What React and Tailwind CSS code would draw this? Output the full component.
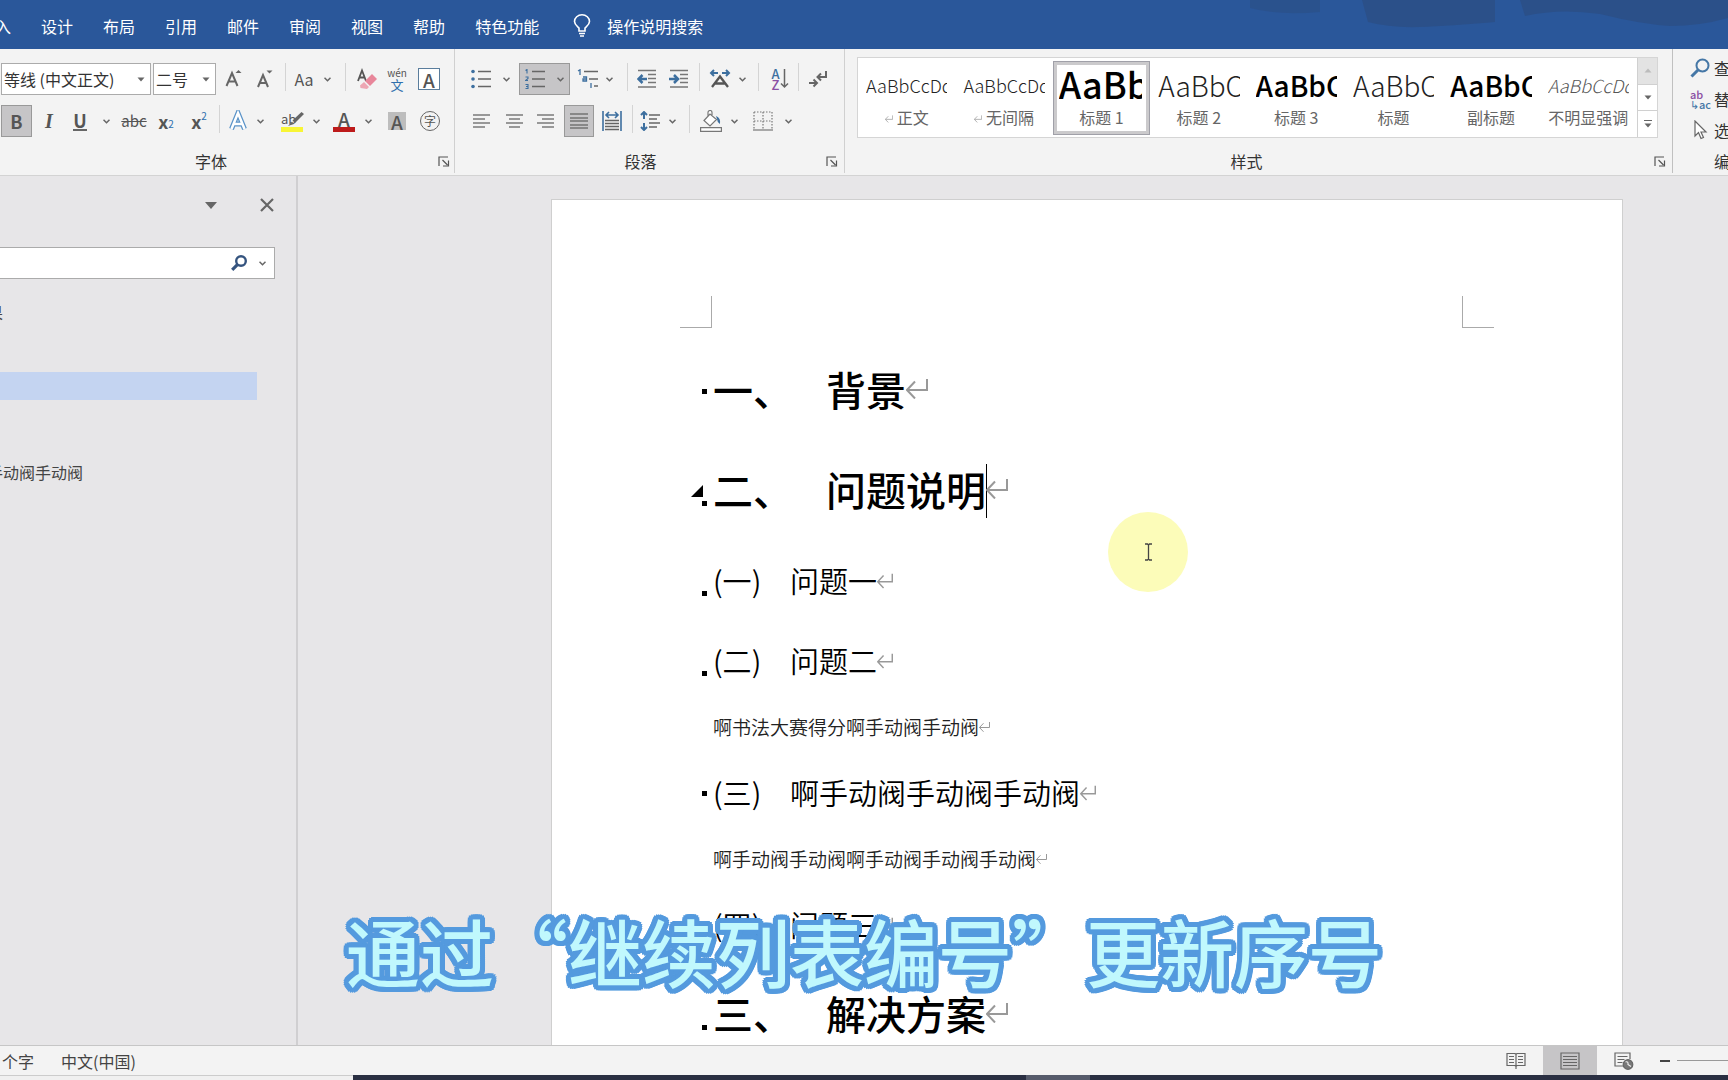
import clsx from "clsx";

const TABS = ["插入", "设计", "布局", "引用", "邮件", "审阅", "视图", "帮助", "特色功能"];

const STYLES = [
  { name: "正文",     sample: "AaBbCcDd", look: "text-lg font-light", mark: true },
  { name: "无间隔",   sample: "AaBbCcDd", look: "text-lg font-light", mark: true },
  { name: "标题 1",   sample: "AaBb",     look: "text-[36px] font-medium text-black", active: true },
  { name: "标题 2",   sample: "AaBbC",    look: "text-[28px] font-light" },
  { name: "标题 3",   sample: "AaBbC",    look: "text-[28px] font-medium text-black" },
  { name: "标题",     sample: "AaBbC",    look: "text-[28px] font-light" },
  { name: "副标题",   sample: "AaBbC",    look: "text-[28px] font-medium text-black" },
  { name: "不明显强调", sample: "AaBbCcDd", look: "text-lg font-light italic text-[#555]" },
];

/* ── Small shared pieces ── */

function Tool({ label, className, on, children }) {
  return (
    <button
      type="button"
      aria-label={label}
      className={clsx(
        "flex h-8 shrink-0 items-center justify-center text-[#555]",
        on && "border border-[#999] bg-[#c6c5c7]",
        className
      )}
    >
      {children}
    </button>
  );
}

function Chevron() {
  return (
    <svg width="7" height="5" viewBox="0 0 7 5" fill="none" stroke="#666" strokeWidth="1.5">
      <path d="M.5 .8 3.5 3.8 6.5 .8" />
    </svg>
  );
}

function Caret({ className }) {
  return (
    <svg width="8" height="5" viewBox="0 0 8 5" fill="#666" className={className}>
      <path d="M.5 .5h7L4 4.5z" />
    </svg>
  );
}

function Sep({ className }) {
  return (
    <div className={clsx("flex h-8 shrink-0 justify-center", className)}>
      <div className="h-7 w-px bg-[#d4d4d4]" />
    </div>
  );
}

function Lines({ rows, width = 20, height = 20, stroke = "#666" }) {
  return (
    <svg width={width} height={height} stroke={stroke} strokeWidth="1.3">
      {rows.map(([x1, x2, y]) => <path key={`${x1}-${y}`} d={`M${x1} ${y}H${x2}`} />)}
    </svg>
  );
}

function GroupLabel({ children, launcherClass }) {
  return (
    <div className="flex h-6 items-center text-base text-[#333]">
      <span className="flex-1 text-center">{children}</span>
      {launcherClass && (
        <button type="button" aria-label={`${children}设置`} className={clsx("flex items-center", launcherClass)}>
          <svg width="12" height="11" viewBox="0 0 12 11" fill="none" stroke="#555" strokeWidth="1.2">
            <path d="M1 10V1h9M4.500 4l5 5M10.500 4.500V10H5" />
          </svg>
        </button>
      )}
    </div>
  );
}

function Glass({ size = 20, color = "#4577a6", ring = 2, className }) {
  return (
    <svg width={size} height={size} viewBox="0 0 20 20" fill="none" stroke={color} className={className}>
      <circle cx="12.500" cy="7.500" r="6" strokeWidth={ring} />
      <path d="M8 12 1.500 18.500" strokeWidth={ring + 1} />
    </svg>
  );
}

/* ── Title bar with the ribbon tabs ── */

function TabBar() {
  return (
    <header className="relative h-[49px] shrink-0 overflow-hidden bg-[#2a579a]">
      <svg className="absolute right-0 top-0" width="478" height="34" viewBox="0 0 478 34" fill="#2b4f86">
        <path d="M0 0H70V12Q30 16 0 8z" opacity=".6" />
        <path d="M112 0H245V22Q200 26 170 27Q140 28 118 22z" opacity=".85" />
        <path d="M270 0H478V18Q450 26 420 26Q390 24 350 14Q310 8 275 16z" opacity=".85" />
      </svg>
      <nav className="relative -ml-[21px] flex h-full items-center gap-[30px] pt-0.5 text-base text-white">
        {TABS.map((tab) => <button key={tab} type="button" className="shrink-0">{tab}</button>)}
        <button type="button" className="ml-1 flex items-center gap-4">
          <svg width="18" height="24" viewBox="0 0 18 24" fill="none" stroke="#fff" strokeWidth="1.6">
            <path d="M6 17v-3C4 12 1.500 10.500 1.500 7.500a7.500 6.700 0 0 1 15 0C16.500 10.500 14 12 12 14v3zM6 19.500h6M7 22h4" />
          </svg>
          操作说明搜索
        </button>
      </nav>
    </header>
  );
}

/* ── 字体 ── */

function Combo({ label, value, className }) {
  return (
    <div className={clsx("relative shrink-0", className)}>
      <select aria-label={label} className="h-8 w-full appearance-none border border-[#ababab] bg-white pl-0.5 text-base text-[#333]">
        <option>{value}</option>
      </select>
      <Caret className="pointer-events-none absolute right-1.5 top-3.5" />
    </div>
  );
}

function FontGroup() {
  return (
    <section className="flex w-[455px] shrink-0 flex-col border-r border-[#d0d0d0] pt-3.5">
      <div className="flex h-[42px] items-start pl-px">
        <Combo label="字体" value="等线 (中文正文)" className="w-[150px]" />
        <Combo label="字号" value="二号" className="ml-0.5 w-[63px]" />
        <Tool label="增大字号" className="ml-[3px] w-[30px]">
          <svg width="18" height="20" viewBox="0 0 18 20" fill="none" stroke="#666" strokeWidth="2">
            <path d="M1.500 17 7 4 12.500 17M3.500 12.500h7" /><path d="M10.500 4 13.500 1 16.500 4z" fill="#666" stroke="none" />
          </svg>
        </Tool>
        <Tool label="减小字号" className="w-8">
          <svg width="18" height="20" viewBox="0 0 18 20" fill="none" stroke="#666" strokeWidth="2">
            <path d="M2 18 7 6 12 18M4 14h6" /><path d="M10.500 1.500h6L13.500 4.500z" fill="#666" stroke="none" />
          </svg>
        </Tool>
        <Sep className="w-2" />
        <Tool label="更改大小写" className="w-[30px] text-base">Aa</Tool>
        <Tool label="大小写选项" className="w-4"><Chevron /></Tool>
        <Sep className="w-5" />
        <Tool label="清除格式" className="w-6">
          <svg width="20" height="22" viewBox="0 0 20 22" fill="none">
            <path d="M1 13 5 2.500 9 13M2.500 9.500h5" stroke="#555" strokeWidth="1.800" />
            <path d="M8 13 15 6l5 5-7 7z" fill="#e8869a" /><path d="M7 14 12 19 10 21 3.500 20 3 17.500z" fill="#eda6b3" />
          </svg>
        </Tool>
        <Tool label="拼音指南" className="w-9 flex-col">
          <span className="text-[10px] leading-[10px]">wén</span>
          <span className="text-[13px] leading-[13px] text-[#2f6fad]">文</span>
        </Tool>
        <Tool label="字符边框" className="w-7">
          <span className="flex size-[22px] items-center justify-center border border-[#5a7d9c] bg-white text-[19px] font-medium leading-none">A</span>
        </Tool>
      </div>
      <div className="flex h-11 items-start pl-px">
        <Tool label="加粗" on className="w-[31px] text-lg font-bold">B</Tool>
        <Tool label="倾斜" className="w-[34px] text-xl font-bold italic"><span className="font-['Liberation_Serif',serif]">I</span></Tool>
        <Tool label="下划线" className="w-7 text-lg font-bold"><span className="border-b-2 border-[#666] leading-[18px]">U</span></Tool>
        <Tool label="下划线选项" className="w-6"><Chevron /></Tool>
        <Tool label="删除线" className="w-8 text-[15px] line-through">abc</Tool>
        <Tool label="下标" className="w-8 text-lg font-bold">x<sub className="text-[10px] font-normal text-[#2f6fad]">2</sub></Tool>
        <Tool label="上标" className="w-[34px] text-lg font-bold">x<sup className="text-[10px] font-normal text-[#2f6fad]">2</sup></Tool>
        <Sep className="w-1.5" />
        <Tool label="文本效果" className="w-8">
          <svg width="20" height="22" viewBox="0 0 20 22" fill="none">
            <path d="M3.500 19 10 3 16.500 19M6 14h8" stroke="#5a93c8" strokeWidth="5" />
            <path d="M3.500 19 10 3 16.500 19M6 14h8" stroke="#fff" strokeWidth="2.500" />
          </svg>
        </Tool>
        <Tool label="文本效果选项" className="w-3"><Chevron /></Tool>
        <Tool label="突出显示" className="ml-3.5 w-6">
          <span className="relative flex flex-col">
            <span className="text-left text-[13px] leading-4">ab</span>
            <span className="h-[5px] w-[22px] bg-[#f8f535]" />
            <svg className="absolute left-1.5 top-0" width="17" height="16" viewBox="0 0 17 16">
              <path d="M14.500 1 17 3 8 12 5.500 9.500z" fill="#666" /><path d="M5 10.500 7 13 1 15z" fill="#666" />
            </svg>
          </span>
        </Tool>
        <Tool label="突出显示选项" className="w-6"><Chevron /></Tool>
        <Tool label="字体颜色" className="w-8 flex-col">
          <span className="text-[19px] font-medium leading-4">A</span>
          <span className="h-[5px] w-[22px] bg-[#bd1a1a]" />
        </Tool>
        <Tool label="字体颜色选项" className="w-4"><Chevron /></Tool>
        <Tool label="字符底纹" className="w-[42px]">
          <span className="flex size-[18px] items-center justify-center bg-[#bdbdbd] text-[19px] font-medium leading-none">A</span>
        </Tool>
        <Tool label="带圈字符" className="w-6">
          <span className="flex size-5 items-center justify-center rounded-full border border-[#666] text-xs leading-none">字</span>
        </Tool>
      </div>
      <GroupLabel launcherClass="w-8 justify-end pr-1">字体</GroupLabel>
    </section>
  );
}

/* ── 段落 ── */

function Indent({ flip }) {
  return (
    <svg width="20" height="20" viewBox="0 0 20 20" fill="none">
      <path d="M1 1.500h18M11 5.500h8M11 9.500h8M11 13.500h8M1 18h18" stroke="#777" strokeWidth="1.300" />
      <path d={flip ? "M0 10h8M5 6l4 4-4 4" : "M10 10H2M5.500 6l-4 4 4 4"} stroke="#3d6f9f" strokeWidth="2.500" />
    </svg>
  );
}

function ParagraphGroup() {
  return (
    <section className="flex w-[390px] shrink-0 flex-col border-r border-[#d0d0d0] pl-1.5 pt-3.5">
      <div className="flex h-[42px] items-start">
        <Tool label="项目符号" className="w-10">
          <svg width="20" height="20" stroke="#666" strokeWidth="1.300">
            <path d="M7 2.500h13M7 10h13M7 17.500h13" />
            <g fill="#3d6f9f" stroke="none"><circle cx="2" cy="2.500" r="1.800" /><circle cx="2" cy="10" r="1.800" /><circle cx="2" cy="17.500" r="1.800" /></g>
          </svg>
        </Tool>
        <Tool label="项目符号选项" className="w-2.5"><Chevron /></Tool>
        <Tool label="编号" on className="ml-2 w-[51px] gap-3">
          <svg width="20" height="20" fill="none" stroke="#666" strokeWidth="1.300">
            <path d="M7 2.500h13M7 10h13M7 17.500h13" />
            <path d="M.5 1.500 2 .5v4M.5 8h2.500v1.500L.5 11.500H3M.5 15.500H3v4H.5M1 17.500h2" stroke="#3d6f9f" strokeWidth="1.100" />
          </svg>
          <Chevron />
        </Tool>
        <Tool label="多级列表" className="ml-[5px] w-6">
          <svg width="21" height="20" fill="none" stroke="#666" strokeWidth="1.300">
            <path d="M7 2.500h14M12 10h9M17 17h4" />
            <path d="M1 2 3 .8V6M6 8h3.500v4H6V10h3.500M14 14v5" stroke="#3d6f9f" />
          </svg>
        </Tool>
        <Tool label="多级列表选项" className="w-5"><Chevron /></Tool>
        <Sep className="w-4" />
        <Tool label="减少缩进量" className="w-6"><Indent /></Tool>
        <Tool label="增加缩进量" className="w-10"><Indent flip /></Tool>
        <Sep className="w-px" />
        <Tool label="中文版式" className="ml-2 w-6">
          <svg width="22" height="20" viewBox="0 0 22 20" fill="none">
            <path d="M3 18 11 7.500 19 18M6 14.500h10" stroke="#555" strokeWidth="2.300" />
            <path d="M9 4H2M5 1 2 4l3 3M13 4h7M17 1l3 3-3 3" stroke="#3d6f9f" strokeWidth="2" />
          </svg>
        </Tool>
        <Tool label="中文版式选项" className="w-5"><Chevron /></Tool>
        <Sep className="w-3" />
        <Tool label="排序" className="w-8">
          <span className="flex flex-col text-[13px] font-medium leading-[11px]">
            <span className="text-[#3d6f9f]">A</span>
            <span className="text-[#8a4fa3]">Z</span>
          </span>
          <svg width="9" height="20" fill="none" stroke="#666" strokeWidth="1.500"><path d="M4.500 0v18M1 14.500 4.500 18 8 14.500" /></svg>
        </Tool>
        <Sep className="w-1" />
        <Tool label="显示编辑标记" className="w-9">
          <svg width="20" height="18" viewBox="0 0 20 18" fill="none" stroke="#666" strokeWidth="2">
            <path d="M18 1v6h-8M13 3.500 9.500 7l3.500 3.500M1 13h8M5.500 9.500 9 13l-3.500 3.500" />
          </svg>
        </Tool>
      </div>
      <div className="flex h-11 items-start">
        <Tool label="左对齐" className="w-10"><Lines width={17} height={14} rows={[[0, 17, 1], [0, 12, 5], [0, 17, 9], [0, 12, 13]]} /></Tool>
        <Tool label="居中" className="w-[26px]"><Lines width={17} height={14} rows={[[0, 17, 1], [3, 14, 5], [0, 17, 9], [3, 14, 13]]} /></Tool>
        <Tool label="右对齐" className="w-[37px]"><Lines width={17} height={14} rows={[[0, 17, 1], [5, 17, 5], [0, 17, 9], [5, 17, 13]]} /></Tool>
        <Tool label="两端对齐" on className="w-[30px]"><Lines width={18} height={16} rows={[[0, 18, 1], [0, 18, 5], [0, 18, 8], [0, 18, 12], [0, 18, 15]]} /></Tool>
        <Tool label="分散对齐" className="w-9">
          <svg width="20" height="20" viewBox="0 0 20 20" fill="none">
            <path d="M1 0v20M19 0v20M4 4h12M7 1 4 4l3 3M13 1l3 3-3 3" stroke="#3d6f9f" strokeWidth="1.600" />
            <path d="M3 9.500h14M3 12.500h14M3 15.500h14M3 18.500h14" stroke="#666" strokeWidth="1.500" />
          </svg>
        </Tool>
        <Sep className="w-1" />
        <Tool label="行距" className="w-8">
          <svg width="20" height="20" viewBox="0 0 20 20" fill="none">
            <path d="M4 1v7M4 12v7M1 4l3-3 3 3M1 16l3 3 3-3" stroke="#3d6f9f" strokeWidth="2" />
            <path d="M9 4h11M9 8h8M9 12h11M9 16h8" stroke="#666" strokeWidth="1.400" />
          </svg>
        </Tool>
        <Tool label="行距选项" className="w-3"><Chevron /></Tool>
        <Sep className="w-[22px]" />
        <Tool label="底纹" className="w-[22px]">
          <svg width="22" height="22" viewBox="0 0 22 22" fill="none">
            <path d="M4 10.500 10 4l6.500 5.500L10 16zM8 6V2.500a2 2 0 0 1 4 0V7" stroke="#777" strokeWidth="1.200" fill="#fff" />
            <path d="M16 6q5 2 4 8-3-2-3-5z" fill="#3d6f9f" />
            <path d="M.6 17.600h20.800v3.800H.6z" stroke="#777" strokeWidth="1.200" fill="#fff" />
          </svg>
        </Tool>
        <Tool label="底纹选项" className="w-6"><Chevron /></Tool>
        <Tool label="边框" className="w-[34px]">
          <svg width="20" height="20" viewBox="0 0 20 20" fill="none" stroke="#777" strokeWidth="1.200">
            <path d="M1 1h18M1 10h18M1 1v17M10 1v17M19 1v17" strokeDasharray="1.500 1.500" /><path d="M0 19h20" />
          </svg>
        </Tool>
        <Tool label="边框选项" className="w-4"><Chevron /></Tool>
      </div>
      <GroupLabel launcherClass="w-6 justify-center">段落</GroupLabel>
    </section>
  );
}

/* ── 样式 ── */

function StyleCard({ name, sample, look, mark, active }) {
  return (
    <button
      type="button"
      className={clsx(
        "flex min-w-0 flex-1 flex-col",
        active ? "border-4 border-[#cbcacc] outline-1 -outline-offset-1 outline-[#a0a0a8]" : "px-1 pt-1"
      )}
    >
      <span
        className={clsx(
          "h-10 self-stretch overflow-hidden whitespace-nowrap text-left text-[#222]",
          active ? "ml-0.5 mr-1 leading-9" : "mx-1 leading-10",
          look
        )}
      >
        {sample}
      </span>
      <span className="flex h-6 items-center justify-center gap-1 self-center whitespace-nowrap text-base text-[#666]">
        {mark && <ReturnMark className="mt-1 h-2 w-2" />}
        {name}
      </span>
    </button>
  );
}

function StylesGroup() {
  return (
    <section className="flex min-w-0 flex-1 flex-col border-r border-[#c0c0c0] pt-2">
      <div className="ml-3 mr-3.5 flex h-[81px] border border-[#d5d5d5] bg-white">
        <div className="flex min-w-0 flex-1 pb-0.5 pt-[3px]">
          {STYLES.map((style) => <StyleCard key={style.name} {...style} />)}
        </div>
        <div className="flex w-5 flex-col divide-y divide-[#d0d0d0] border-l border-[#d0d0d0]">
          <button type="button" aria-label="上一行" className="flex flex-1 items-center justify-center bg-[#e3e3e3]">
            <Caret className="rotate-180 opacity-30" />
          </button>
          <button type="button" aria-label="下一行" className="flex flex-1 items-center justify-center"><Caret /></button>
          <button type="button" aria-label="其他样式" className="flex flex-1 flex-col items-center justify-center gap-0.5">
            <span className="h-px w-2 bg-[#666]" />
            <Caret />
          </button>
        </div>
      </div>
      <div className="mt-[11px]"><GroupLabel launcherClass="w-6 justify-center">样式</GroupLabel></div>
    </section>
  );
}

function EditGroup() {
  return (
    <section className="flex w-[55px] shrink-0 flex-col overflow-hidden whitespace-nowrap pl-[17px] pt-[3px] text-base text-[#333]">
      <button type="button" className="flex h-[31px] items-center gap-1"><Glass className="shrink-0" />查找</button>
      <button type="button" className="flex h-[31px] items-center gap-1">
        <span className="flex w-5 shrink-0 flex-col text-[11px] font-medium leading-[10px]">
          <span className="text-left text-[#8a4fa3]">ab</span>
          <span className="text-right text-[#4577a6]">↳ac</span>
        </span>
        替换
      </button>
      <button type="button" className="flex h-[31px] items-center gap-1">
        <svg className="shrink-0" width="20" height="20" viewBox="0 0 20 20" fill="#fff" stroke="#666" strokeWidth="1.200">
          <path d="M5 1v15l3.500-3.500L11 18.500l2.500-1L11 12h5z" />
        </svg>
        选择
      </button>
      <span className="ml-6 mt-1 flex h-6 items-center">编辑</span>
    </section>
  );
}

/* ── Navigation pane ── */

function NavPane() {
  return (
    <aside className="flex w-[298px] shrink-0 flex-col overflow-hidden border-r-2 border-[#d0cfd1] text-base text-[#444]">
      <div className="flex h-[71px] items-start justify-end gap-[43px] pr-[22px] pt-[22px]">
        <button type="button" aria-label="任务窗格选项" className="mt-1">
          <svg width="12" height="7" fill="#666"><path d="M0 0h12L6 7z" /></svg>
        </button>
        <button type="button" aria-label="关闭">
          <svg width="14" height="14" stroke="#666" strokeWidth="2.200"><path d="M1 1 13 13M13 1 1 13" /></svg>
        </button>
      </div>
      <div className="mr-[21px] flex h-8 items-center border border-l-0 border-[#ababab] bg-white pr-2">
        <input type="text" aria-label="在文档中搜索" className="min-w-0 flex-1 bg-transparent px-2 outline-none" />
        <button type="button" aria-label="搜索"><Glass size={16} color="#35547f" ring={3} /></button>
        <button type="button" aria-label="搜索选项" className="ml-3"><Chevron /></button>
      </div>
      <button type="button" className="-ml-[29px] mt-[21px] h-6 self-start leading-6">结果</button>
      <div className="mr-[39px] mt-12 h-7 bg-[#c4d4f1]" />
      <a href="#valve" className="-ml-[13px] mt-[60px] h-6 leading-6">手动阀手动阀</a>
    </aside>
  );
}

/* ── Document ── */

function ReturnMark({ className }) {
  return (
    <svg viewBox="0 0 22 20" className={clsx("shrink-0", className)} fill="none" stroke="#999" strokeWidth="2">
      <path d="M21 0v11H1M9 2.500 1 11l8 8.500" />
    </svg>
  );
}

function Marker({ low, open }) {
  return (
    <span className={clsx("mr-1.5 flex w-4 shrink-0 flex-col items-end", low && "mt-6")}>
      {open && <svg width="12" height="12" className="-mt-4 mb-1 mr-1"><path d="M12 0v12H0z" /></svg>}
      <span className="size-[5px] bg-black" />
    </span>
  );
}

function Heading1({ num, children, low, open, caret }) {
  return (
    <h1 className="flex h-[100px] items-center text-[40px] font-medium leading-none text-black">
      <Marker low={low} open={open} />
      <span className="w-[113px] shrink-0 pb-1">{num}</span>
      <span className="pb-1">{children}</span>
      {caret && <span className="-mr-px h-[54px] w-px bg-black" />}
      <ReturnMark className="-mt-1 h-5 w-[22px]" />
    </h1>
  );
}

function Heading2({ num, children, low }) {
  return (
    <h2 className="flex h-20 items-center text-[29px] font-[350] leading-none text-black">
      <Marker low={low} />
      <span className="w-[77px] shrink-0 pb-0.5">({num})</span>
      <span className="pb-0.5">{children}</span>
      <ReturnMark className="h-4 w-4" />
    </h2>
  );
}

function Body({ children }) {
  return (
    <p className="flex h-[52px] items-center pl-[22px] text-[19px] font-[350] leading-none text-[#222]">
      <span className="pb-0.5">{children}</span>
      <ReturnMark className="h-2.5 w-[11px]" />
    </p>
  );
}

function Document() {
  return (
    <main className="relative min-w-0 flex-1 overflow-hidden pl-[253px] pr-[105px] pt-[23px]">
      <article className="h-[1200px] border border-[#cfcfcf] bg-white pt-24">
        <div className="flex justify-between px-32">
          <div className="size-8 border-b border-r border-[#aaa]" />
          <div className="size-8 border-b border-l border-[#aaa]" />
        </div>
        <div className="pl-[139px] pt-[13px]">
          <Heading1 num="一、">背景</Heading1>
          <Heading1 num="二、" low open caret>问题说明</Heading1>
          <Heading2 num="一" low>问题一</Heading2>
          <Heading2 num="二" low>问题二</Heading2>
          <Body>啊书法大赛得分啊手动阀手动阀</Body>
          <Heading2 num="三">啊手动阀手动阀手动阀</Heading2>
          <Body>啊手动阀手动阀啊手动阀手动阀手动阀</Body>
          <Heading2 num="四" low>问题三</Heading2>
          <Heading1 num="三、" low>解决方案</Heading1>
        </div>
      </article>

      {/* mouse pointer with its highlight */}
      <div className="absolute left-[810px] top-[336px] flex size-20 items-center justify-center rounded-full bg-[#fcfcb9]">
        <svg width="9" height="18" fill="none" stroke="#444" strokeWidth="1.300">
          <path d="M1 1h2.500l1 1 1-1H8M1 17h2.500l1-1 1 1H8M4.500 2v14" />
        </svg>
      </div>
    </main>
  );
}

/* ── Status bar ── */

function StatusBar() {
  return (
    <footer className="flex h-[30px] shrink-0 items-center overflow-hidden border-t border-[#c6c6c6] bg-[#f3f3f3] text-base text-[#444]">
      <span className="ml-0.5">个字</span>
      <span className="ml-[27px]">中文(中国)</span>
      <button type="button" aria-label="阅读视图" className="ml-auto flex h-full w-[54px] items-center justify-center">
        <svg width="20" height="17" viewBox="0 0 20 17" fill="none" stroke="#666" strokeWidth="1.200">
          <path d="M1 1.500h8l1 1 1-1h8v12h-8l-1 1-1-1H1zM10 2v15M3 4.500h5M3 7.500h5M3 10.500h5M12 4.500h5M12 7.500h5M12 10.500h5" />
        </svg>
      </button>
      <button type="button" aria-label="页面视图" className="flex h-full w-[54px] items-center justify-center bg-[#c6c5c7]">
        <svg width="20" height="18" viewBox="0 0 20 18" fill="none" stroke="#666" strokeWidth="1.200">
          <path d="M1 1h18v16H1zM3 4.500h14M3 7.500h14M3 10.500h14M3 13.500h14" />
        </svg>
      </button>
      <button type="button" aria-label="Web 版式视图" className="flex h-full w-[54px] items-center justify-center">
        <svg width="20" height="18" viewBox="0 0 20 18" fill="none" stroke="#666" strokeWidth="1.200">
          <path d="M9 14H1V1h15v6M3.500 4.500h10M3.500 7.500h7M3.500 10.500h5" />
          <circle cx="14" cy="12.500" r="4.800" fill="#777" /><path d="M11.500 10q3-1 2.500 2.500l3 2" stroke="#eee" />
        </svg>
      </button>
      <button type="button" aria-label="缩小" className="ml-1 flex w-5 justify-center"><span className="h-0.5 w-2.5 bg-[#444]" /></button>
      <div className="flex w-[53px] items-center overflow-hidden pl-0.5">
        <input
          type="range"
          aria-label="缩放"
          defaultValue="100"
          className="h-px w-40 shrink-0 appearance-none bg-[#999] [&::-webkit-slider-thumb]:h-3 [&::-webkit-slider-thumb]:w-1.5 [&::-webkit-slider-thumb]:appearance-none [&::-webkit-slider-thumb]:bg-[#666]"
        />
      </div>
    </footer>
  );
}

export default function App() {
  return (
    <div
      lang="zh-CN"
      className="relative flex h-screen flex-col overflow-hidden bg-[#e7e6e8] font-['Noto_Sans_CJK_SC',sans-serif]"
    >
      <TabBar />
      <div className="flex h-[127px] shrink-0 border-b border-[#d3d3d3] bg-[#f3f3f3] pb-0.5">
        <FontGroup />
        <ParagraphGroup />
        <StylesGroup />
        <EditGroup />
      </div>
      <div className="flex min-h-0 flex-1">
        <NavPane />
        <Document />
      </div>
      <StatusBar />

      {/* top edge of the desktop taskbar */}
      <div className="flex h-[5px] shrink-0 bg-[#2a2f42]">
        <div className="w-[353px] border-t border-[#ccc] bg-[#f0f0f0]" />
        <div className="ml-[673px] w-16 bg-[#565b6b]" />
      </div>

      {/* video caption, outlined with a ring of shadows so the corners stay round */}
      <p className="pointer-events-none absolute inset-x-0 bottom-[93px] whitespace-nowrap text-center text-[74px] font-medium leading-[74px] text-[#c0f8fd] [text-shadow:5px_0_#549ade,-5px_0_#549ade,0_5px_#549ade,0_-5px_#549ade,5px_2px_#549ade,5px_-2px_#549ade,-5px_2px_#549ade,-5px_-2px_#549ade,2px_5px_#549ade,2px_-5px_#549ade,-2px_5px_#549ade,-2px_-5px_#549ade,4px_4px_#549ade,4px_-4px_#549ade,-4px_4px_#549ade,-4px_-4px_#549ade,2px_2px_#549ade,-2px_-2px_#549ade,2px_-2px_#549ade,-2px_2px_#549ade]">
        通过“继续列表编号”更新序号
      </p>
    </div>
  );
}
